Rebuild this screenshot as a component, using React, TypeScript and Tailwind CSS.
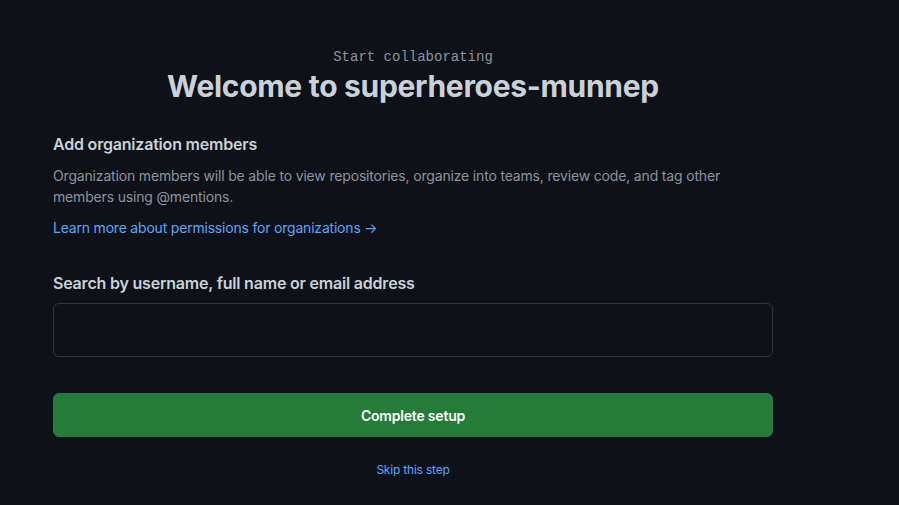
export default function App() {
  return (
    <div className="min-h-screen bg-[#0e1117] font-['Inter',sans-serif] text-[#c9d1d9]">
      <div className="w-[720px] ml-[53px] pt-[47px]">
        <div className="flex flex-col items-center">
          <p className="font-['Liberation_Mono',monospace] text-[14px] leading-[20px] text-[#8b949e]">
            Start collaborating
          </p>
          <h1 className="text-[30px] leading-[38px] font-bold text-[#c9d1d9] tracking-[-0.3px]">
            Welcome to superheroes-munnep
          </h1>
        </div>

        <div className="mt-[27px] tracking-[-0.2px]">
          <h2 className="text-[16px] leading-[24px] font-semibold text-[#c9d1d9]">Add organization members</h2>
          <p className="mt-[9px] text-[14px] leading-[21px] text-[#8b949e] tracking-[-0.17px]">
            Organization members will be able to view repositories, organize into teams, review code, and tag other
            members using @mentions.
          </p>
          <a href="#" className="block mt-[10px] text-[14px] leading-[21px] text-[#58a6ff]">
            Learn more about permissions for organizations →
          </a>
        </div>

        <div className="mt-[33px] tracking-[-0.2px]">
          <label className="block text-[16px] leading-[24px] font-semibold text-[#c9d1d9]">
            Search by username, full name or email address
          </label>
          <input
            type="text"
            className="block mt-[8px] w-full h-[54px] rounded-[6px] border border-[#30363d] bg-[#0e1117] px-3 text-[14px] text-[#c9d1d9] outline-none"
          />
        </div>

        <button className="mt-[36px] w-full h-[44px] rounded-[6px] bg-[#247c39] border border-[#2b7a3d] text-white text-[14px] font-semibold tracking-[-0.2px]">
          Complete setup
        </button>

        <div className="mt-[24px] flex justify-center">
          <a href="#" className="text-[12px] leading-[18px] text-[#58a6ff] tracking-[-0.2px]">
            Skip this step
          </a>
        </div>
      </div>
    </div>
  );
}
